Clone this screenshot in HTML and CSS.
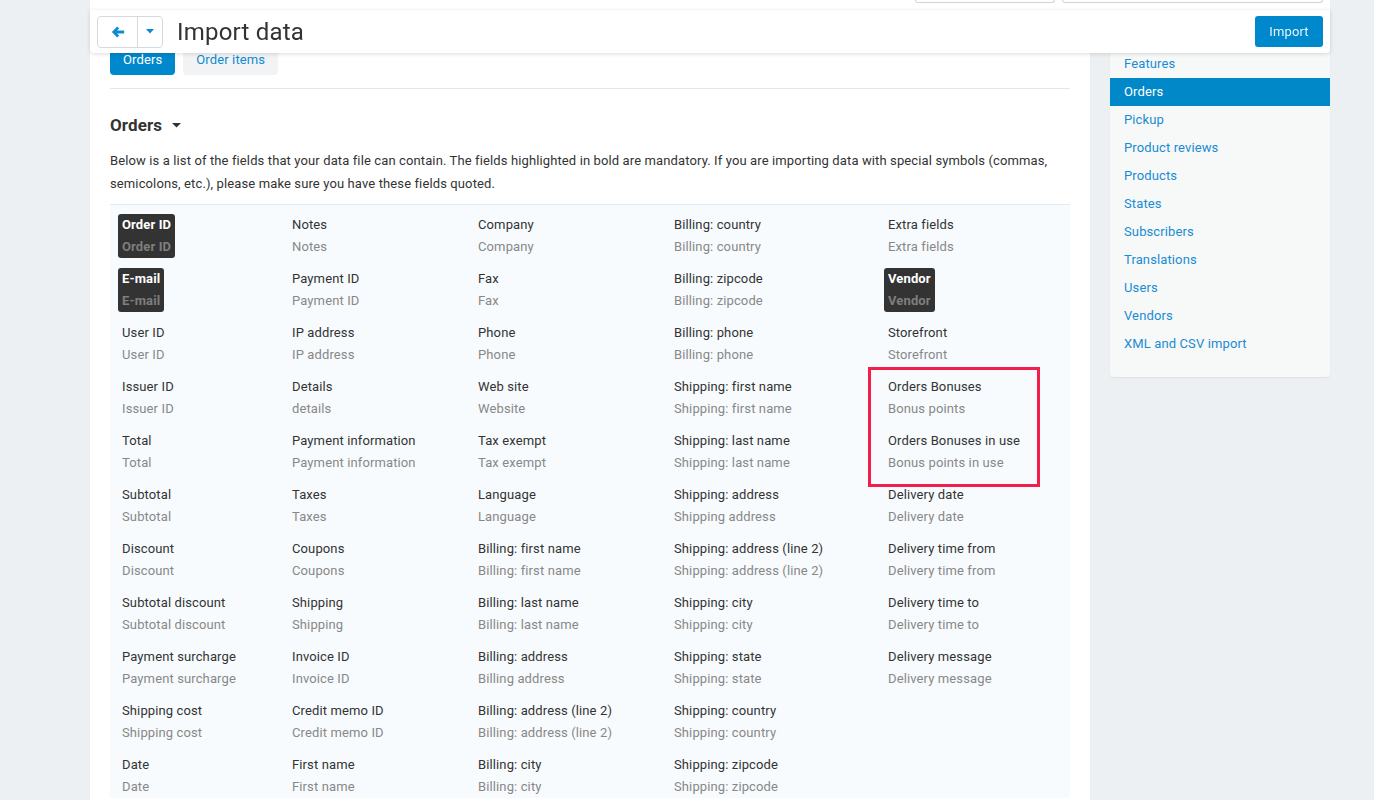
FILE: index.html
```html
<!DOCTYPE html>
<html>
<head>
<meta charset="utf-8">
<link rel="stylesheet" href="styles.css">
</head>
<body>
<div class="page">
  <div class="topstrip">
    <div class="fake-input w1"></div>
    <div class="fake-input w2"></div>
  </div>

  <header class="header">
    <div class="btn-group">
      <button class="btn back" aria-label="Back">
        <svg width="14" height="12" viewBox="0 0 14 12"><path d="M6.2 0.6 L0.9 6 L6.2 11.4 L8.2 9.4 L6 7.4 L13.2 7.4 L13.2 4.6 L6 4.6 L8.2 2.6 Z" fill="#0a8bd6"/></svg>
      </button>
      <button class="btn caret-btn" aria-label="More">
        <svg width="8" height="5" viewBox="0 0 8 5"><path d="M0 0 L8 0 L4 4.5 Z" fill="#0a8bd6"/></svg>
      </button>
    </div>
    <h1 class="title">Import data</h1>
    <button class="import-btn">Import</button>
  </header>

  <div class="columns">
    <main class="main">
      <div class="tabs">
        <a class="tab active">Orders</a>
        <a class="tab">Order items</a>
      </div>

      <h2 class="section-title">Orders <svg class="caret" width="9" height="5" viewBox="0 0 9 5"><path d="M0 0 L9 0 L4.5 4.5 Z" fill="#333"/></svg></h2>
      <p class="intro">Below is a list of the fields that your data file can contain. The fields highlighted in bold are mandatory. If you are importing data with special symbols (commas, semicolons, etc.), please make sure you have these fields quoted.</p>

      <div class="fields-wrap">
        <div class="fields">
          <div class="cell"><div class="field req"><div class="fname">Order ID</div><div class="fsub">Order ID</div></div></div>
          <div class="cell"><div class="field"><div class="fname">Notes</div><div class="fsub">Notes</div></div></div>
          <div class="cell"><div class="field"><div class="fname">Company</div><div class="fsub">Company</div></div></div>
          <div class="cell"><div class="field"><div class="fname">Billing: country</div><div class="fsub">Billing: country</div></div></div>
          <div class="cell"><div class="field"><div class="fname">Extra fields</div><div class="fsub">Extra fields</div></div></div>

          <div class="cell"><div class="field req"><div class="fname">E-mail</div><div class="fsub">E-mail</div></div></div>
          <div class="cell"><div class="field"><div class="fname">Payment ID</div><div class="fsub">Payment ID</div></div></div>
          <div class="cell"><div class="field"><div class="fname">Fax</div><div class="fsub">Fax</div></div></div>
          <div class="cell"><div class="field"><div class="fname">Billing: zipcode</div><div class="fsub">Billing: zipcode</div></div></div>
          <div class="cell"><div class="field req"><div class="fname">Vendor</div><div class="fsub">Vendor</div></div></div>

          <div class="cell"><div class="field"><div class="fname">User ID</div><div class="fsub">User ID</div></div></div>
          <div class="cell"><div class="field"><div class="fname">IP address</div><div class="fsub">IP address</div></div></div>
          <div class="cell"><div class="field"><div class="fname">Phone</div><div class="fsub">Phone</div></div></div>
          <div class="cell"><div class="field"><div class="fname">Billing: phone</div><div class="fsub">Billing: phone</div></div></div>
          <div class="cell"><div class="field"><div class="fname">Storefront</div><div class="fsub">Storefront</div></div></div>

          <div class="cell"><div class="field"><div class="fname">Issuer ID</div><div class="fsub">Issuer ID</div></div></div>
          <div class="cell"><div class="field"><div class="fname">Details</div><div class="fsub">details</div></div></div>
          <div class="cell"><div class="field"><div class="fname">Web site</div><div class="fsub">Website</div></div></div>
          <div class="cell"><div class="field"><div class="fname">Shipping: first name</div><div class="fsub">Shipping: first name</div></div></div>
          <div class="cell"><div class="field"><div class="fname">Orders Bonuses</div><div class="fsub">Bonus points</div></div></div>

          <div class="cell"><div class="field"><div class="fname">Total</div><div class="fsub">Total</div></div></div>
          <div class="cell"><div class="field"><div class="fname">Payment information</div><div class="fsub">Payment information</div></div></div>
          <div class="cell"><div class="field"><div class="fname">Tax exempt</div><div class="fsub">Tax exempt</div></div></div>
          <div class="cell"><div class="field"><div class="fname">Shipping: last name</div><div class="fsub">Shipping: last name</div></div></div>
          <div class="cell"><div class="field"><div class="fname">Orders Bonuses in use</div><div class="fsub">Bonus points in use</div></div></div>

          <div class="cell"><div class="field"><div class="fname">Subtotal</div><div class="fsub">Subtotal</div></div></div>
          <div class="cell"><div class="field"><div class="fname">Taxes</div><div class="fsub">Taxes</div></div></div>
          <div class="cell"><div class="field"><div class="fname">Language</div><div class="fsub">Language</div></div></div>
          <div class="cell"><div class="field"><div class="fname">Shipping: address</div><div class="fsub">Shipping address</div></div></div>
          <div class="cell"><div class="field"><div class="fname">Delivery date</div><div class="fsub">Delivery date</div></div></div>

          <div class="cell"><div class="field"><div class="fname">Discount</div><div class="fsub">Discount</div></div></div>
          <div class="cell"><div class="field"><div class="fname">Coupons</div><div class="fsub">Coupons</div></div></div>
          <div class="cell"><div class="field"><div class="fname">Billing: first name</div><div class="fsub">Billing: first name</div></div></div>
          <div class="cell"><div class="field"><div class="fname">Shipping: address (line 2)</div><div class="fsub">Shipping: address (line 2)</div></div></div>
          <div class="cell"><div class="field"><div class="fname">Delivery time from</div><div class="fsub">Delivery time from</div></div></div>

          <div class="cell"><div class="field"><div class="fname">Subtotal discount</div><div class="fsub">Subtotal discount</div></div></div>
          <div class="cell"><div class="field"><div class="fname">Shipping</div><div class="fsub">Shipping</div></div></div>
          <div class="cell"><div class="field"><div class="fname">Billing: last name</div><div class="fsub">Billing: last name</div></div></div>
          <div class="cell"><div class="field"><div class="fname">Shipping: city</div><div class="fsub">Shipping: city</div></div></div>
          <div class="cell"><div class="field"><div class="fname">Delivery time to</div><div class="fsub">Delivery time to</div></div></div>

          <div class="cell"><div class="field"><div class="fname">Payment surcharge</div><div class="fsub">Payment surcharge</div></div></div>
          <div class="cell"><div class="field"><div class="fname">Invoice ID</div><div class="fsub">Invoice ID</div></div></div>
          <div class="cell"><div class="field"><div class="fname">Billing: address</div><div class="fsub">Billing address</div></div></div>
          <div class="cell"><div class="field"><div class="fname">Shipping: state</div><div class="fsub">Shipping: state</div></div></div>
          <div class="cell"><div class="field"><div class="fname">Delivery message</div><div class="fsub">Delivery message</div></div></div>

          <div class="cell"><div class="field"><div class="fname">Shipping cost</div><div class="fsub">Shipping cost</div></div></div>
          <div class="cell"><div class="field"><div class="fname">Credit memo ID</div><div class="fsub">Credit memo ID</div></div></div>
          <div class="cell"><div class="field"><div class="fname">Billing: address (line 2)</div><div class="fsub">Billing: address (line 2)</div></div></div>
          <div class="cell"><div class="field"><div class="fname">Shipping: country</div><div class="fsub">Shipping: country</div></div></div>
          <div class="cell"></div>

          <div class="cell"><div class="field"><div class="fname">Date</div><div class="fsub">Date</div></div></div>
          <div class="cell"><div class="field"><div class="fname">First name</div><div class="fsub">First name</div></div></div>
          <div class="cell"><div class="field"><div class="fname">Billing: city</div><div class="fsub">Billing: city</div></div></div>
          <div class="cell"><div class="field"><div class="fname">Shipping: zipcode</div><div class="fsub">Shipping: zipcode</div></div></div>
          <div class="cell"></div>
        </div>
        <div class="highlight-box"></div>
      </div>
    </main>

    <aside class="side">
      <nav class="side-card">
        <a class="side-item">Features</a>
        <a class="side-item active">Orders</a>
        <a class="side-item">Pickup</a>
        <a class="side-item">Product reviews</a>
        <a class="side-item">Products</a>
        <a class="side-item">States</a>
        <a class="side-item">Subscribers</a>
        <a class="side-item">Translations</a>
        <a class="side-item">Users</a>
        <a class="side-item">Vendors</a>
        <a class="side-item">XML and CSV import</a>
      </nav>
    </aside>
  </div>
</div>
</body>
</html>
```

FILE: styles.css
```css
* { box-sizing: border-box; }

html, body {
  margin: 0;
  height: 800px;
  overflow: hidden;
}

body {
  background: #edf0f2;
  font-family: Roboto, "Liberation Sans", sans-serif;
  font-size: 13px;
  letter-spacing: 0.12px;
  color: #333;
}

.page {
  width: 1240px;
  margin-left: 90px;
}

.topstrip {
  height: 10px;
  background: #fff;
  display: flex;
  justify-content: flex-end;
  align-items: flex-start;
  gap: 7px;
  padding-right: 7px;
  overflow: hidden;
}

.fake-input {
  height: 3px;
  border: 1px solid #cfd4d9;
  border-top: none;
  border-radius: 0 0 4px 4px;
}
.fake-input.w1 { width: 140px; }
.fake-input.w2 { width: 261px; }

.header {
  position: fixed;
  top: 10px;
  left: 90px;
  width: 1240px;
  height: 43px;
  background: #fff;
  box-shadow: 0 1px 4px rgba(0, 0, 0, 0.14);
  display: flex;
  align-items: center;
  padding: 0 7px;
  z-index: 10;
  border-radius: 0 0 4px 4px;
}

.btn-group {
  display: flex;
  height: 32px;
  border: 1px solid #d5dadf;
  border-radius: 4px;
  background: #fff;
}

.btn {
  border: none;
  background: transparent;
  display: flex;
  align-items: center;
  justify-content: center;
  padding: 0;
}
.btn.back { width: 40px; border-right: 1px solid #d5dadf; }
.btn.caret-btn { width: 24px; }

.title {
  margin: 0 0 0 14px;
  font-weight: 400;
  font-size: 24px;
  color: #333;
  letter-spacing: 0.2px;
  flex: 1;
}

.import-btn {
  height: 31px;
  width: 68px;
  background: #0088cc;
  border: none;
  border-radius: 3px;
  color: #e6f3fb;
  font-family: inherit;
  font-size: 13px;
  letter-spacing: 0.12px;
  padding: 0;
}

.columns {
  display: flex;
  align-items: flex-start;
}

.main {
  width: 1000px;
  background: #fff;
  min-height: 790px;
  padding: 35px 20px 0;
}

.tabs {
  display: flex;
  gap: 8px;
  padding-bottom: 13px;
  border-bottom: 1px solid #e3e7eb;
}

.tab {
  height: 30px;
  line-height: 30px;
  padding: 0 13px;
  border-radius: 4px;
  background: #f2f3f4;
  color: #0f8ad2;
}
.tab.active {
  background: #0088cc;
  color: #fff;
}

.section-title {
  margin: 25px 0 0;
  font-size: 17px;
  font-weight: 700;
  line-height: 22px;
  color: #333;
  display: flex;
  align-items: center;
  gap: 10px;
}

.intro {
  margin: 13px 0 0;
  line-height: 23px;
  padding-bottom: 9px;
  border-bottom: 1px solid #e6eaee;
}

.fields-wrap {
  position: relative;
  background: #f7fbfe;
  padding-top: 9px;
}

.fields {
  display: grid;
  grid-template-columns: 170px 186px 196px 214px 194px;
  row-gap: 10px;
}

.cell {
  padding-left: 8px;
  min-height: 44px;
}

.field {
  display: inline-block;
  padding: 0 4px;
  line-height: 22px;
  border-radius: 3px;
}

.fname { color: #333; }
.fsub { color: #888; }

.field.req {
  background: #333;
  font-weight: 700;
}
.field.req .fname { color: #fff; }
.field.req .fsub { color: #7e7e7e; }

.highlight-box {
  position: absolute;
  left: 758px;
  top: 162px;
  width: 172px;
  height: 120px;
  border: 3px solid #f21f4d;
}

.side {
  width: 240px;
  padding-left: 20px;
}

.side-card {
  background: #f7f8f8;
  border-radius: 0 0 4px 4px;
  box-shadow: 0 1px 2px rgba(0, 0, 0, 0.06);
  padding: 40px 0 19px;
  display: flex;
  flex-direction: column;
}

.side-item {
  height: 28px;
  line-height: 28px;
  padding-left: 14px;
  color: #1a8cd3;
}
.side-item.active {
  background: #0088c9;
  color: #fff;
}
```
